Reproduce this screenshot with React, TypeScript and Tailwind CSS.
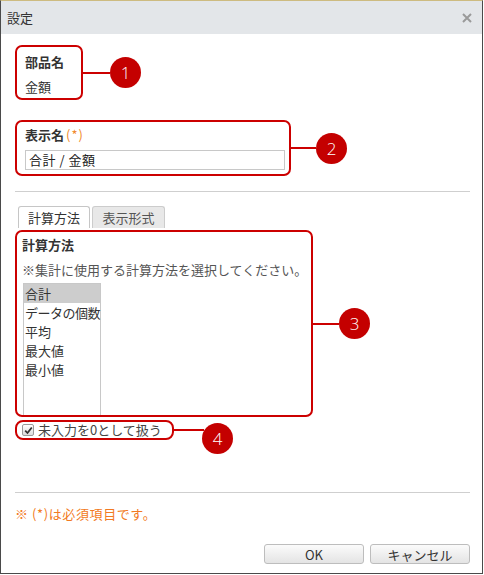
import React from 'react'

const Badge: React.FC<{ n: number; className?: string }> = ({ n, className = '' }) => (
  <div
    className={`w-[31px] h-[31px] shrink-0 rounded-full bg-[#c40000] text-white flex items-center justify-center text-[17px] font-light leading-none font-['Open_Sans',sans-serif] ${className}`}
  >
    {n}
  </div>
)

const App: React.FC = () => {
  return (
    <div className="w-[484px] h-[575px] bg-white text-[13px] text-[#333] font-['Noto_Sans_CJK_JP',sans-serif]">
      <div className="w-[483px] h-[574px] flex flex-col border border-[#4a4a4a] border-t-[#cdbb80]">
        {/* title bar */}
        <div className="h-[33px] shrink-0 bg-[#e3e6e9] flex items-center justify-between pl-[6px] pr-[10px]">
          <span className="leading-none">設定</span>
          <svg width="10" height="10" viewBox="0 0 10 10">
            <path d="M1 1L9 9M9 1L1 9" stroke="#9a9a9a" strokeWidth="2" />
          </svg>
        </div>

        <div className="flex-1 flex flex-col pl-[14px] pr-[12px] pt-[11px]">
          {/* 1 */}
          <div className="flex items-center">
            <div className="w-[68px] h-[55px] border-2 border-[#cc0000] rounded-[7px] pl-[8px] pt-[5px] flex flex-col gap-[5px]">
              <div className="font-bold leading-[20px]">部品名</div>
              <div className="leading-[20px]">金額</div>
            </div>
            <div className="w-[27px] h-[2px] bg-[#cc0000]" />
            <Badge n={1} />
          </div>

          {/* 2 */}
          <div className="flex items-center mt-[20px]">
            <div className="w-[276px] h-[56px] border-2 border-[#cc0000] rounded-[7px] pl-[8px] pt-[3px] flex flex-col">
              <div className="leading-[20px]">
                <span className="font-bold">表示名</span>
                <span className="ml-[2px] text-[#f08a2c] tracking-[1px]">(*)</span>
              </div>
              <div className="mt-[5px] w-[260px] h-[20px] border border-[#c8c8c8] px-[3px] leading-[18px] text-[#222] tracking-[0.5px]">
                合計 / 金額
              </div>
            </div>
            <div className="w-[25px] h-[2px] bg-[#cc0000]" />
            <Badge n={2} />
          </div>

          <div className="mt-[15px] h-[1px] bg-[#cfcfcf]" />

          {/* tabs */}
          <div className="mt-[14px] flex pl-[3px] gap-[2px]">
            <div className="w-[72px] h-[22px] border border-b-0 border-[#c6c6c6] rounded-t-[3px] bg-white flex items-center justify-center leading-none">
              計算方法
            </div>
            <div className="w-[73px] h-[22px] border border-b-0 border-[#cccccc] rounded-t-[3px] bg-[#e8e8e8] text-[#555] flex items-center justify-center leading-none">
              表示形式
            </div>
          </div>

          {/* 3 */}
          <div className="flex items-center mt-[2px]">
            <div className="w-[298px] h-[187px] border-2 border-[#cc0000] rounded-[7px] pl-[5px] pt-[3px] flex flex-col">
              <div className="font-bold leading-[20px]">計算方法</div>
              <div className="mt-[5px] leading-[20px] text-[#555] whitespace-nowrap">
                ※集計に使用する計算方法を選択してください。
              </div>
              <div className="mt-[3px] ml-[1px] w-[78px] h-[132px] border border-b-0 border-[#c8c8c8] flex flex-col">
                <div className="leading-[19px] pl-[1px] bg-[#cdcdcd]">合計</div>
                <div className="leading-[19px] pl-[1px] whitespace-nowrap tracking-[-0.5px]">データの個数</div>
                <div className="leading-[19px] pl-[1px]">平均</div>
                <div className="leading-[19px] pl-[1px]">最大値</div>
                <div className="leading-[19px] pl-[1px]">最小値</div>
              </div>
            </div>
            <div className="w-[26px] h-[2px] bg-[#cc0000]" />
            <Badge n={3} />
          </div>

          {/* 4 */}
          <div className="flex items-start mt-[3px]">
            <div className="w-[159px] h-[20px] border-2 border-[#cc0000] rounded-[8px] pl-[5px] flex items-center gap-[4px]">
              <span className="w-[12px] h-[12px] shrink-0 rounded-[2px] border border-[#9a9a9a] bg-gradient-to-b from-white to-[#dcdcdc] flex items-center justify-center">
                <svg width="9" height="9" viewBox="0 0 9 9">
                  <path d="M1.2 4.6L3.5 7L7.8 1.5" stroke="#333" strokeWidth="1.8" fill="none" />
                </svg>
              </span>
              <span className="leading-[16px] text-[#444] whitespace-nowrap">未入力を0として扱う</span>
            </div>
            <div className="mt-[9px] w-[30px] h-[2px] bg-[#cc0000]" />
            <Badge n={4} className="mt-[3px] ml-[-2px]" />
          </div>

          <div className="mt-[38px] h-[1px] bg-[#cfcfcf]" />

          <div className="mt-[11px] leading-[20px] text-[#f27a22] tracking-[0.6px]">※ (*)は必須項目です。</div>

          <div className="mt-[20px] flex justify-end gap-[6px]">
            <button className="w-[100px] h-[20px] border border-[#bdbdbd] rounded-[3px] bg-gradient-to-b from-[#fbfbfb] to-[#e4e4e4] text-[#333] leading-none">
              OK
            </button>
            <button className="w-[100px] h-[20px] border border-[#bdbdbd] rounded-[3px] bg-gradient-to-b from-[#fbfbfb] to-[#e4e4e4] text-[#333] leading-none">
              キャンセル
            </button>
          </div>
        </div>
      </div>
    </div>
  )
}

export default App
